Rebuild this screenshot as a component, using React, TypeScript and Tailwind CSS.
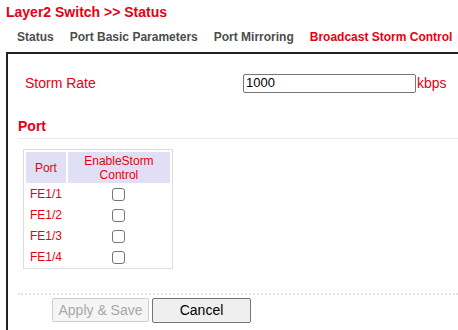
const ports = ['FE1/1', 'FE1/2', 'FE1/3', 'FE1/4']

export default function App() {
  return (
    <div className="w-[458px] h-[330px] overflow-hidden bg-white font-['Liberation_Sans',Arial,sans-serif]">
      <div className="pl-[6px] pt-[3px] h-[22px] leading-[18px] text-[14px] font-bold text-[#e60012]">
        Layer2 Switch &gt;&gt; Status
      </div>
      <div className="flex gap-[16px] pl-[17px] h-[30px] items-center text-[12px] font-bold text-[#4d4d4d]">
        <span>Status</span>
        <span>Port Basic Parameters</span>
        <span>Port Mirroring</span>
        <span className="text-[#e60012]">Broadcast Storm Control</span>
      </div>
      <div className="ml-[6px] border-t-2 border-l-2 border-[#222] h-[300px]">
        <div className="flex items-center pl-[17px] pt-[20px] h-[38px]">
          <span className="w-[218px] text-[14px] text-[#e60012]">Storm Rate</span>
          <input
            defaultValue="1000"
            className="w-[173px] h-[19px] border border-[#767676] rounded-[2px] px-[2px] text-[13px] text-black outline-none"
          />
          <span className="text-[14px] text-[#e60012] ml-px">kbps</span>
        </div>
        <div className="ml-[10px] mt-[26px] h-[21px] border-b border-[#e8e8e8] text-[14px] font-bold text-[#e60012] leading-[16px]">
          Port
        </div>
        <div className="ml-[15px] mt-[10px] w-[150px] h-[120px] border border-[#dcdcdc] p-px overflow-hidden">
          <table className="border-separate border-spacing-[2px] -m-[1px] text-[12px] text-[#e60012]">
            <thead>
              <tr className="bg-[#e1dff5]">
                <th className="w-[40px] h-[31px] p-0 font-normal leading-[14px]">Port</th>
                <th className="w-[103px] p-0 font-normal leading-[14px]">EnableStorm<br />Control</th>
              </tr>
            </thead>
            <tbody>
              {ports.map((p) => (
                <tr key={p}>
                  <td className="h-[19px] p-0 pl-[4px] leading-[19px] text-[12px]">{p}</td>
                  <td className="p-0 text-center leading-[19px]">
                    <span className="inline-block w-[13px] h-[13px] border border-[#767676] rounded-[3px] bg-white align-middle"></span>
                  </td>
                </tr>
              ))}
            </tbody>
          </table>
        </div>
        <div className="ml-[10px] mt-[24px] border-t-2 border-dotted border-[#e4e4e4]"></div>
        <div className="flex gap-[3px] ml-[44px] mt-[3px]">
          <button className="w-[97px] h-[24px] border border-[#d0d0d0] rounded-[2px] bg-[#f5f5f5] text-[14px] text-[#a8a8a8]">
            Apply &amp; Save
          </button>
          <button className="w-[99px] h-[25px] border border-[#767676] rounded-[2px] bg-[#efefef] text-[14px] text-black">
            Cancel
          </button>
        </div>
      </div>
    </div>
  )
}
